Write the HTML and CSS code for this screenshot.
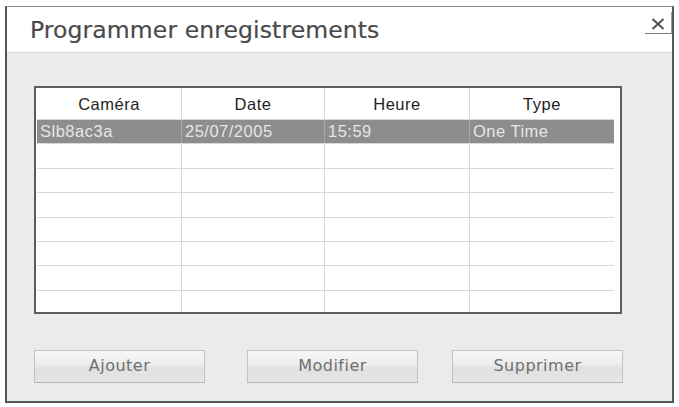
FILE: index.html
```html
<!DOCTYPE html>
<html lang="fr">
<head>
<meta charset="utf-8">
<title>Programmer enregistrements</title>
<link rel="stylesheet" href="styles.css">
</head>
<body>
<div class="dialog">
  <div class="titlebar">
    <div class="title">Programmer enregistrements</div>
    <div class="close">
      <svg width="14" height="12" viewBox="0 0 14 12"><path d="M1.5 1 L12.5 11 M12.5 1 L1.5 11" stroke="#505050" stroke-width="2" fill="none"/></svg>
    </div>
  </div>
  <div class="content">
    <div class="frame">
      <div class="grid">
        <div class="row head">
          <div class="cell">Caméra</div>
          <div class="cell">Date</div>
          <div class="cell">Heure</div>
          <div class="cell">Type</div>
        </div>
        <div class="row selected">
          <div class="cell">Slb8ac3a</div>
          <div class="cell">25/07/2005</div>
          <div class="cell">15:59</div>
          <div class="cell">One Time</div>
        </div>
        <div class="row"><div class="cell"></div><div class="cell"></div><div class="cell"></div><div class="cell"></div></div>
        <div class="row"><div class="cell"></div><div class="cell"></div><div class="cell"></div><div class="cell"></div></div>
        <div class="row"><div class="cell"></div><div class="cell"></div><div class="cell"></div><div class="cell"></div></div>
        <div class="row"><div class="cell"></div><div class="cell"></div><div class="cell"></div><div class="cell"></div></div>
        <div class="row"><div class="cell"></div><div class="cell"></div><div class="cell"></div><div class="cell"></div></div>
        <div class="row"><div class="cell"></div><div class="cell"></div><div class="cell"></div><div class="cell"></div></div>
        <div class="row"><div class="cell"></div><div class="cell"></div><div class="cell"></div><div class="cell"></div></div>
      </div>
    </div>
    <div class="buttons">
      <button class="btn">Ajouter</button>
      <button class="btn btn-mid">Modifier</button>
      <button class="btn btn-last">Supprimer</button>
    </div>
  </div>
</div>
</body>
</html>
```
FILE: styles.css
```css
html, body {
  margin: 0;
  padding: 0;
  background: #ffffff;
}
.dialog {
  box-sizing: border-box;
  margin: 6px 0 0 5px;
  width: 669px;
  height: 397px;
  border: 2px solid #555;
  border-top: 1px solid #8a8a8a;
  background: #ebebeb;
  display: flex;
  flex-direction: column;
}
.titlebar {
  box-sizing: border-box;
  height: 46px;
  background: #ffffff;
  border-bottom: 1px solid #d6d6d6;
  display: flex;
  align-items: flex-start;
}
.title {
  padding: 9px 0 0 23px;
  font-family: "DejaVu Sans", Verdana, sans-serif;
  font-size: 23.5px;
  line-height: 28px;
  color: #4a4a4a;
  letter-spacing: 0.1px;
  -webkit-text-stroke: 0.2px #4a4a4a;
}
.close {
  box-sizing: border-box;
  margin: 5px 0 0 auto;
  width: 27px;
  height: 22px;
  border-bottom: 1px solid #7a7a7a;
  border-right: 1px solid #9a9a9a;
  display: flex;
  align-items: center;
  justify-content: center;
  padding: 2px 0 0 0;
}
.content {
  padding: 33px 0 0 27px;
}
.frame {
  box-sizing: border-box;
  width: 588px;
  height: 228px;
  border: 2px solid #5c5c5c;
  background: #ffffff;
  padding: 0 0 0 1px;
  overflow: hidden;
}
.grid {
  width: 577px;
}
.row {
  box-sizing: border-box;
  display: grid;
  grid-template-columns: 145px 143px 145px 144px;
  height: 24.4px;
  border-bottom: 1px solid #d8d8d8;
  font-family: "Liberation Sans", Arial, sans-serif;
  font-size: 16.5px;
  letter-spacing: 0.5px;
}
.row.head {
  height: 32px;
  color: #1e1e1e;
}
.cell {
  box-sizing: border-box;
  border-right: 1px solid #d8d8d8;
  padding-left: 3px;
  display: flex;
  align-items: center;
  white-space: nowrap;
  overflow: hidden;
}
.cell:last-child {
  border-right: none;
}
.head .cell {
  justify-content: center;
  padding-left: 0;
  padding-top: 1px;
}
.selected {
  background: #8d8d8d;
  color: #e6e6e6;
}
.selected .cell {
  border-right-color: #a8a8a8;
}
.buttons {
  display: flex;
  margin-top: 36px;
}
.btn {
  box-sizing: border-box;
  width: 171px;
  height: 33px;
  border: 1px solid #c2c2c2;
  border-bottom-color: #b4b4b4;
  border-radius: 0;
  background: linear-gradient(#f7f7f7 0%, #ececec 45%, #e0e0e0 55%, #e6e6e6 100%);
  font-family: "DejaVu Sans", Verdana, sans-serif;
  font-size: 16px;
  letter-spacing: 0.5px;
  color: #707070;
  padding: 0 0 2px 0;
  margin: 0;
}
.btn-mid {
  margin-left: 42px;
}
.btn-last {
  margin-left: 34px;
}
```
